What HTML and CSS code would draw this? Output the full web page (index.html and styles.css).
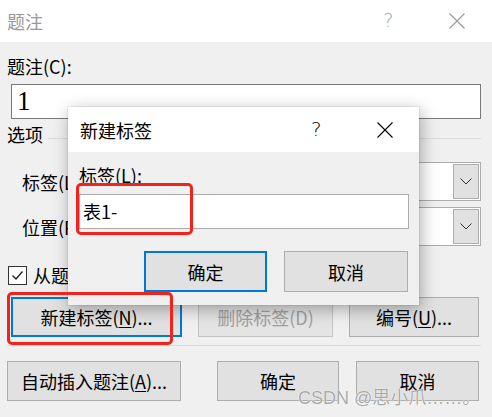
FILE: index.html
```html
<!DOCTYPE html>
<html lang="zh-CN">
<head>
<meta charset="utf-8">
<title>题注</title>
<link rel="stylesheet" href="styles.css">
</head>
<body>
<div class="dlg">
  <div class="titlebar">
    <span class="title">题注</span>
    <span class="help">?</span>
    <span class="close"><svg width="16" height="16" viewBox="0 0 16 16"><path d="M0.5 0.5L15.5 15.5M15.5 0.5L0.5 15.5" stroke="currentColor" stroke-width="1.1" fill="none"/></svg></span>
  </div>
  <div class="body">
    <div class="caplbl">题注(C):</div>
    <div class="textbox main-input">1</div>
    <div class="group"><span class="group-title">选项</span><i class="rule"></i></div>
    <div class="field">
      <span class="flabel">标签(L):</span>
      <div class="combo"><span class="val">表</span><span class="drop"><svg width="12" height="7" viewBox="0 0 12 7"><path d="M0.5 0.5L6 6L11.5 0.5" stroke="#333" stroke-width="1" fill="none"/></svg></span></div>
    </div>
    <div class="field field2">
      <span class="flabel">位置(P):</span>
      <div class="combo"><span class="val">所选项目下方</span><span class="drop"><svg width="12" height="7" viewBox="0 0 12 7"><path d="M0.5 0.5L6 6L11.5 0.5" stroke="#333" stroke-width="1" fill="none"/></svg></span></div>
    </div>
    <div class="check-row">
      <span class="checkbox"><svg width="17" height="17" viewBox="0 0 17 17"><path d="M3.5 8.5L7 12L13.5 4.5" stroke="#222" stroke-width="1.4" fill="none"/></svg></span>
      <span class="check-label">从题注中排除标签(E)</span>
    </div>
    <div class="btn-row">
      <button class="btn btn-new focused">新建标签(<u>N</u>)...</button>
      <button class="btn btn-del disabled">删除标签(D)</button>
      <button class="btn btn-num">编号(<u>U</u>)...</button>
    </div>
    <div class="sep"></div>
    <div class="btn-row bottom-row">
      <button class="btn btn-auto">自动插入题注(<u>A</u>)...</button>
      <button class="btn btn-ok">确定</button>
      <button class="btn btn-cancel">取消</button>
    </div>
  </div>

  <div class="subdlg">
    <div class="sub-titlebar">
      <span class="sub-title">新建标签</span>
      <span class="sub-help">?</span>
      <span class="sub-close"><svg width="16" height="16" viewBox="0 0 16 16"><path d="M0.5 0.5L15.5 15.5M15.5 0.5L0.5 15.5" stroke="currentColor" stroke-width="1.1" fill="none"/></svg></span>
    </div>
    <div class="sub-body">
      <div class="sub-lbl">标签(L):</div>
      <div class="textbox sub-input">表1-</div>
      <div class="sub-btns">
        <button class="btn sub-ok focused">确定</button>
        <button class="btn sub-cancel">取消</button>
      </div>
    </div>
  </div>

  <div class="mark mark1"></div>
  <div class="mark mark2"></div>
  <div class="watermark">CSDN @思小爪……。</div>
</div>
</body>
</html>
```

FILE: styles.css
```css
* { box-sizing: border-box; }
html, body { margin: 0; padding: 0; }
body {
  width: 492px;
  height: 417px;
  overflow: hidden;
  background: #f0f0f0;
  font-family: "Noto Sans CJK SC", "Noto Sans", sans-serif;
  font-size: 18px;
  color: #000;
}
.dlg {
  position: relative;
  width: 492px;
  height: 417px;
  background: #f0f0f0;
}
.titlebar {
  height: 42px;
  background: #fff;
  display: flex;
  align-items: center;
  padding-left: 7px;
}
.title {
  color: #999;
  line-height: 24px;
  flex: 1;
}
.help {
  font-family: "DejaVu Sans", sans-serif;
  font-weight: 200;
  font-size: 20px;
  color: #a6a6a6;
  width: 66px;
  margin-top: -2px;
}
.close {
  color: #999;
  width: 43px;
  display: flex;
}
.body {
  padding: 0 11px 0 7px;
}
.caplbl {
  margin-top: 12px;
  line-height: 24px;
}
.textbox {
  background: #fff;
  border: 1px solid #7a7a7a;
  height: 35px;
}
.main-input {
  margin-top: 6px;
  margin-left: 4px;
  font-family: "Liberation Serif", serif;
  font-size: 27px;
  line-height: 33px;
  padding-left: 5px;
}
.group {
  margin-top: 3px;
  height: 24px;
  line-height: 24px;
  display: flex;
}
.group-title { width: 41px; }
.rule {
  flex: 1;
  height: 1px;
  margin-top: 16px;
  background: #dcdcdc;
}
.field {
  margin-top: 16px;
  display: flex;
  align-items: center;
  height: 39px;
}
.field2 { margin-top: 6px; }
.flabel {
  width: 103px;
  padding-left: 15px;
  line-height: 24px;
}
.combo {
  flex: 1;
  height: 39px;
  border: 1px solid #adadad;
  background: #fff;
  display: flex;
  align-items: center;
  padding: 1px;
}
.val { flex: 1; padding-left: 6px; }
.drop {
  width: 26px;
  height: 35px;
  background: #e1e1e1;
  border: 1px solid #adadad;
  display: flex;
  align-items: center;
  justify-content: center;
}
.check-row {
  margin-top: 20px;
  height: 19px;
  display: flex;
  align-items: center;
}
.checkbox {
  width: 19px;
  height: 19px;
  margin-left: 1px;
  border: 1px solid #333;
  background: #fff;
  display: flex;
  align-items: center;
  justify-content: center;
}
.check-label {
  margin-left: 6px;
  line-height: 19px;
}
.btn {
  font-family: "Noto Sans CJK SC", "Noto Sans", sans-serif;
  font-size: 18px;
  color: #000;
  background: #e1e1e1;
  border: 1px solid #adadad;
  padding: 0;
  margin: 0;
  height: 40px;
  line-height: 24px;
}
.btn u { text-underline-offset: 2px; }
.focused {
  border: 2px solid #0078d7;
}
.btn-row {
  margin-top: 12px;
  display: flex;
  gap: 16px;
}
.btn-new { width: 171px; margin-left: 4px; }
.btn-del { width: 135px; }
.btn-num { width: 130px; }
.disabled {
  color: #a0a0a0;
  border-color: #c4c4c4;
  background: #e4e4e4;
}
.sep {
  margin-top: 8px;
  height: 1px;
  background: #dadada;
}
.bottom-row {
  margin-top: 15px;
  gap: 0;
}
.btn-auto { width: 174px; }
.btn-ok { width: 122px; margin-left: 36px; }
.btn-cancel { width: 123px; margin-left: 17px; }

/* overlay sub-dialog */
.subdlg {
  position: absolute;
  left: 68px;
  top: 107px;
  width: 351px;
  height: 198px;
  background: #f0f0f0;
  box-shadow: 0 0 0 1px rgba(0,0,0,0.06), 2px 4px 16px rgba(0,0,0,0.32);
}
.sub-titlebar {
  height: 45px;
  background: #fff;
  display: flex;
  align-items: center;
  padding-left: 12px;
}
.sub-title { flex: 1; line-height: 24px; }
.sub-help {
  font-family: "DejaVu Sans", sans-serif;
  font-weight: 200;
  font-size: 20px;
  width: 66px;
  margin-top: -2px;
}
.sub-close {
  width: 42px;
  display: flex;
}
.sub-body {
  padding: 11px 10px 0 11px;
}
.sub-lbl { line-height: 24px; }
.sub-input {
  margin-top: 7px;
  border-color: #adadad;
  line-height: 33px;
  padding-left: 3px;
}
.sub-btns {
  margin-top: 22px;
  display: flex;
  gap: 17px;
  padding-left: 65px;
}
.sub-ok { width: 123px; height: 41px; }
.sub-cancel { width: 124px; height: 41px; }

/* red annotation boxes */
.mark {
  position: absolute;
  border: 3px solid #f3231b;
  border-radius: 5px;
}
.mark1 { left: 76px; top: 183px; width: 117px; height: 52px; }
.mark2 { left: 7px; top: 292px; width: 166px; height: 53px; }

.watermark {
  position: absolute;
  left: 298px;
  top: 386px;
  font-family: "Liberation Sans", "Noto Sans CJK SC", sans-serif;
  font-size: 18px;
  line-height: 24px;
  color: rgba(140,140,140,0.75);
  text-shadow: 0 0 1px #fff, 0 0 1px #fff;
  white-space: nowrap;
}
```
